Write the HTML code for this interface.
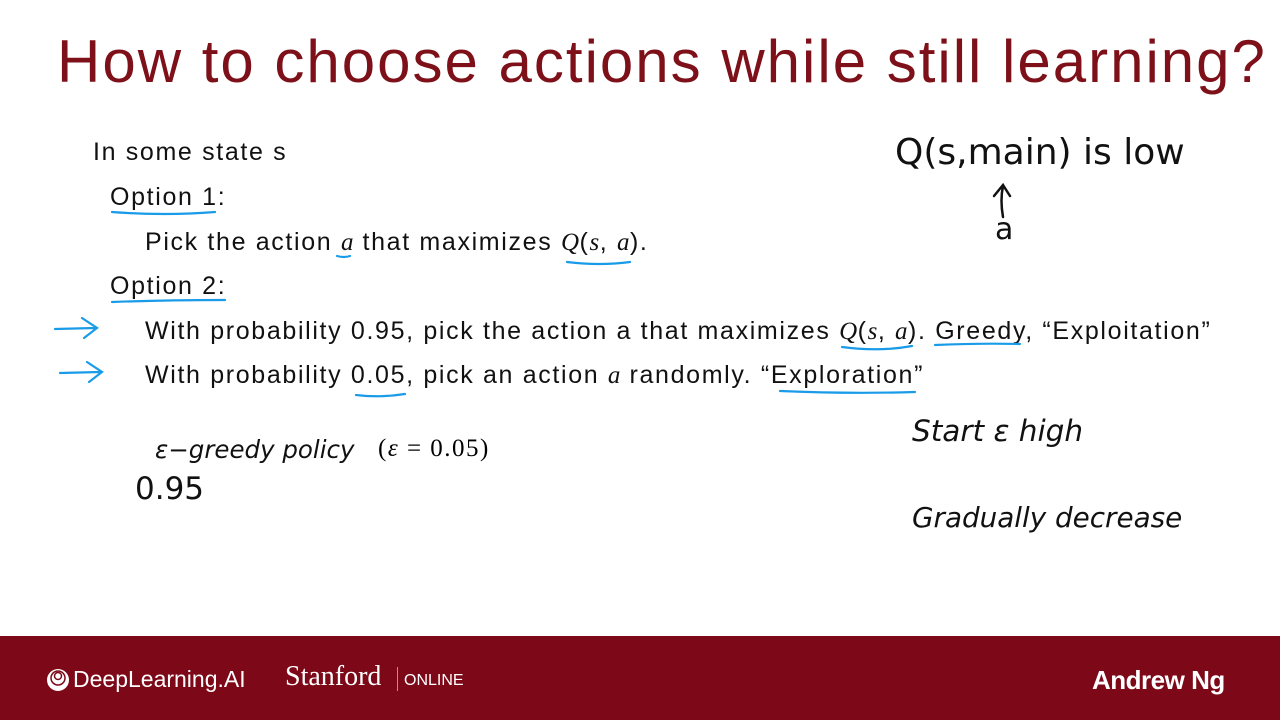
<!DOCTYPE html>
<html><head><meta charset="utf-8"><style>
body{margin:0;width:1280px;height:720px;background:#fff;position:relative;overflow:hidden;font-family:"Liberation Sans",sans-serif}
.a{position:absolute;white-space:nowrap}
.t{font-size:25px;color:#111;letter-spacing:1.65px}
.h{font-family:"Comic Sans MS","DejaVu Sans",sans-serif;font-style:italic;color:#111}
.m{font-family:"Liberation Serif",serif;font-style:italic;letter-spacing:0.5px}
</style></head><body>
<div class="a" style="left:57px;top:27px;font-size:60px;color:#7d1019;letter-spacing:2px">How to choose actions while still learning?</div>
<div class="a t" style="left:93px;top:138px">In some state s</div>
<div class="a t" style="left:110px;top:183px">Option 1:</div>
<div class="a t" style="left:145px;top:228px">Pick the action <span class="m">a</span> that maximizes <span class="m">Q</span>(<span class="m">s</span>, <span class="m">a</span>).</div>
<div class="a t" style="left:110px;top:272px">Option 2:</div>
<div class="a t" style="left:145px;top:317px">With probability 0.95, pick the action a that maximizes <span class="m">Q</span>(<span class="m">s</span>, <span class="m">a</span>). Greedy, “Exploitation”</div>
<div class="a t" style="left:145px;top:361px">With probability 0.05, pick an action <span class="m">a</span> randomly. “Exploration”</div>
<div class="a h" style="left:155px;top:435px;font-size:24.5px">ε−greedy policy</div>
<div class="a" style="left:378px;top:435px;font-size:25px;font-family:'Liberation Serif',serif;letter-spacing:1.5px">(<i>ε</i> = 0.05)</div>
<div class="a h" style="left:135px;top:471px;font-size:31px;font-style:normal">0.95</div>
<div class="a h" style="left:895px;top:132px;font-size:36px;font-style:normal">Q(s,main) is low</div>
<div class="a h" style="left:995px;top:212px;font-size:30px;font-style:normal">a</div>
<div class="a h" style="left:912px;top:414px;font-size:29.5px">Start ε high</div>
<div class="a h" style="left:912px;top:501px;font-size:27.8px">Gradually decrease</div>
<svg class="a" style="left:0;top:0" width="1280" height="640" fill="none" stroke-linecap="round">
<g stroke="#1a9be8" stroke-width="2.2">
<path d="M112 212 Q165 216 215 212"/><path d="M337 256 Q344 258 350 256"/><path d="M567 262 Q600 266 630 262"/>
<path d="M112 302 Q165 300 225 300"/><path d="M842 347 Q880 352 912 346"/><path d="M935 345 Q980 343 1020 344"/>
<path d="M356 395 Q380 398 405 394"/><path d="M780 391 Q850 394 915 392"/>
<path d="M55 329 L95 328 M82 318 L97 328 L84 338"/><path d="M60 373 L100 372 M87 362 L102 372 L89 382"/>
</g>
<g stroke="#111" stroke-width="2.5"><path d="M1003 217 Q1000 200 1003 186 M994 196 L1003 185 L1010 196"/></g>
</svg>
<div class="a" style="left:0;top:636px;width:1280px;height:84px;background:#7c0818"></div>
<svg class="a" style="left:45px;top:667px" width="26" height="26"><circle cx="13" cy="13" r="11" fill="#fff"/><circle cx="13" cy="11" r="7" fill="none" stroke="#7c0818" stroke-width="1.5"/><circle cx="13" cy="9" r="3.5" fill="none" stroke="#7c0818" stroke-width="1.5"/></svg>
<div class="a" style="left:73px;top:666px;color:#fff;font-size:23px">DeepLearning.AI</div>
<div class="a" style="left:285px;top:661px;color:#fff;font-size:28px;font-family:'Liberation Serif',serif">Stanford</div>
<div class="a" style="left:397px;top:667px;width:1px;height:24px;background:#c88"></div>
<div class="a" style="left:404px;top:672px;color:#fff;font-size:16px">ONLINE</div>
<div class="a" style="left:1092px;top:665px;color:#fff;font-size:26px;font-weight:bold;letter-spacing:-0.5px">Andrew Ng</div>
</body></html>
